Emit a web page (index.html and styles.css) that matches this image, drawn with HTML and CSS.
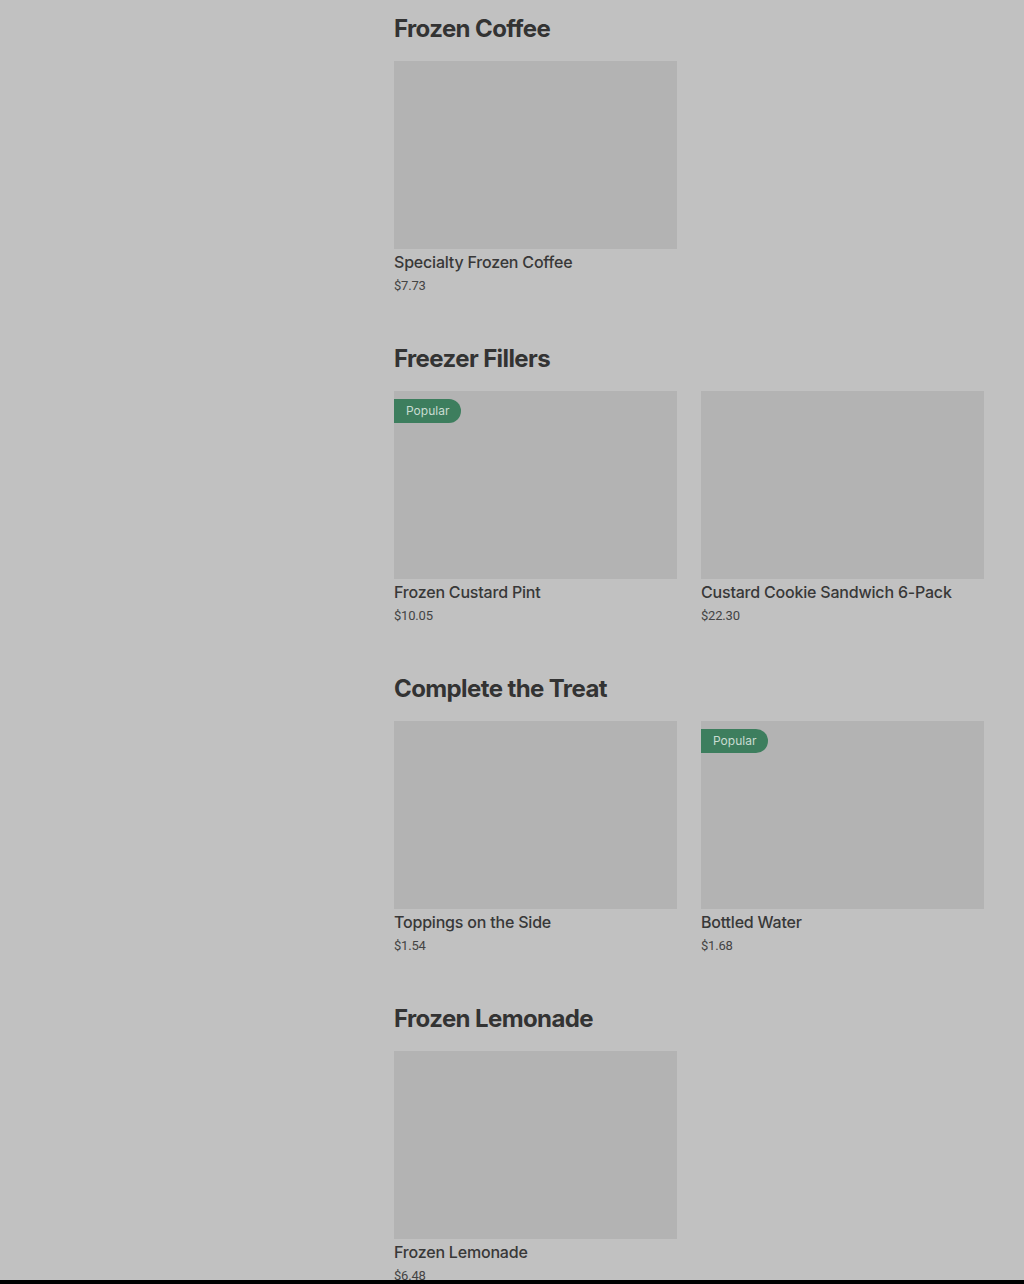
FILE: index.html
```html
<!DOCTYPE html>
<html lang="en">
  <head>
    <meta charset="UTF-8" />
    <meta name="viewport" content="width=device-width, initial-scale=1.0" />
    <title>Menu</title>
    <link rel="stylesheet" href="styles.css">
  </head>
  <body>
    <main class="menu">
      <section class="category">
        <h2>Frozen Coffee</h2>
        <div class="items">
          <div class="item">
            <div class="item-image"></div>
            <div class="item-name">Specialty Frozen Coffee</div>
            <div class="item-price">$7.73</div>
          </div>
        </div>
      </section>

      <section class="category">
        <h2>Freezer Fillers</h2>
        <div class="items">
          <div class="item">
            <div class="item-image"><span class="badge">Popular</span></div>
            <div class="item-name">Frozen Custard Pint</div>
            <div class="item-price">$10.05</div>
          </div>
          <div class="item">
            <div class="item-image"></div>
            <div class="item-name">Custard Cookie Sandwich 6-Pack</div>
            <div class="item-price">$22.30</div>
          </div>
        </div>
      </section>

      <section class="category">
        <h2>Complete the Treat</h2>
        <div class="items">
          <div class="item">
            <div class="item-image"></div>
            <div class="item-name">Toppings on the Side</div>
            <div class="item-price">$1.54</div>
          </div>
          <div class="item">
            <div class="item-image"><span class="badge">Popular</span></div>
            <div class="item-name">Bottled Water</div>
            <div class="item-price">$1.68</div>
          </div>
        </div>
      </section>

      <section class="category">
        <h2>Frozen Lemonade</h2>
        <div class="items">
          <div class="item">
            <div class="item-image"></div>
            <div class="item-name">Frozen Lemonade</div>
            <div class="item-price">$6.48</div>
          </div>
        </div>
      </section>
    </main>
    <div class="bottom-bar"></div>
  </body>
</html>
```

FILE: styles.css
```css
body {
  margin: 0;
  background-color: #c1c1c1;
  color: #333;
  font-family: "Inter", sans-serif;
}

.menu {
  padding: 13px 0 0 394px;
  width: 590px;
}

.category {
  margin-bottom: 47px;
}

.category h2 {
  margin: 0 0 16px;
  font-size: 24px;
  font-weight: 700;
  line-height: 32px;
  letter-spacing: -0.6px;
  color: #333;
}

.items {
  display: grid;
  grid-template-columns: 283px 283px;
  column-gap: 24px;
}

.item-image {
  position: relative;
  height: 188px;
  background-color: #b3b3b3;
}

.badge {
  position: absolute;
  top: 8px;
  left: 0;
  height: 24px;
  padding: 0 12px;
  border-radius: 0 12px 12px 0;
  background-color: #3d7e5e;
  color: #c9dcd2;
  font-size: 12px;
  line-height: 24px;
}

.item-name {
  margin-top: 1px;
  font-size: 16px;
  font-weight: 500;
  line-height: 24px;
  letter-spacing: -0.2px;
  color: #383838;
}

.item-price {
  margin-top: 2px;
  font-family: "Roboto", sans-serif;
  font-size: 13px;
  line-height: 20px;
  color: #444;
  letter-spacing: -0.2px;
}

.bottom-bar {
  position: fixed;
  left: 0;
  right: 0;
  bottom: 0;
  height: 4px;
  background-color: #000;
}
```
